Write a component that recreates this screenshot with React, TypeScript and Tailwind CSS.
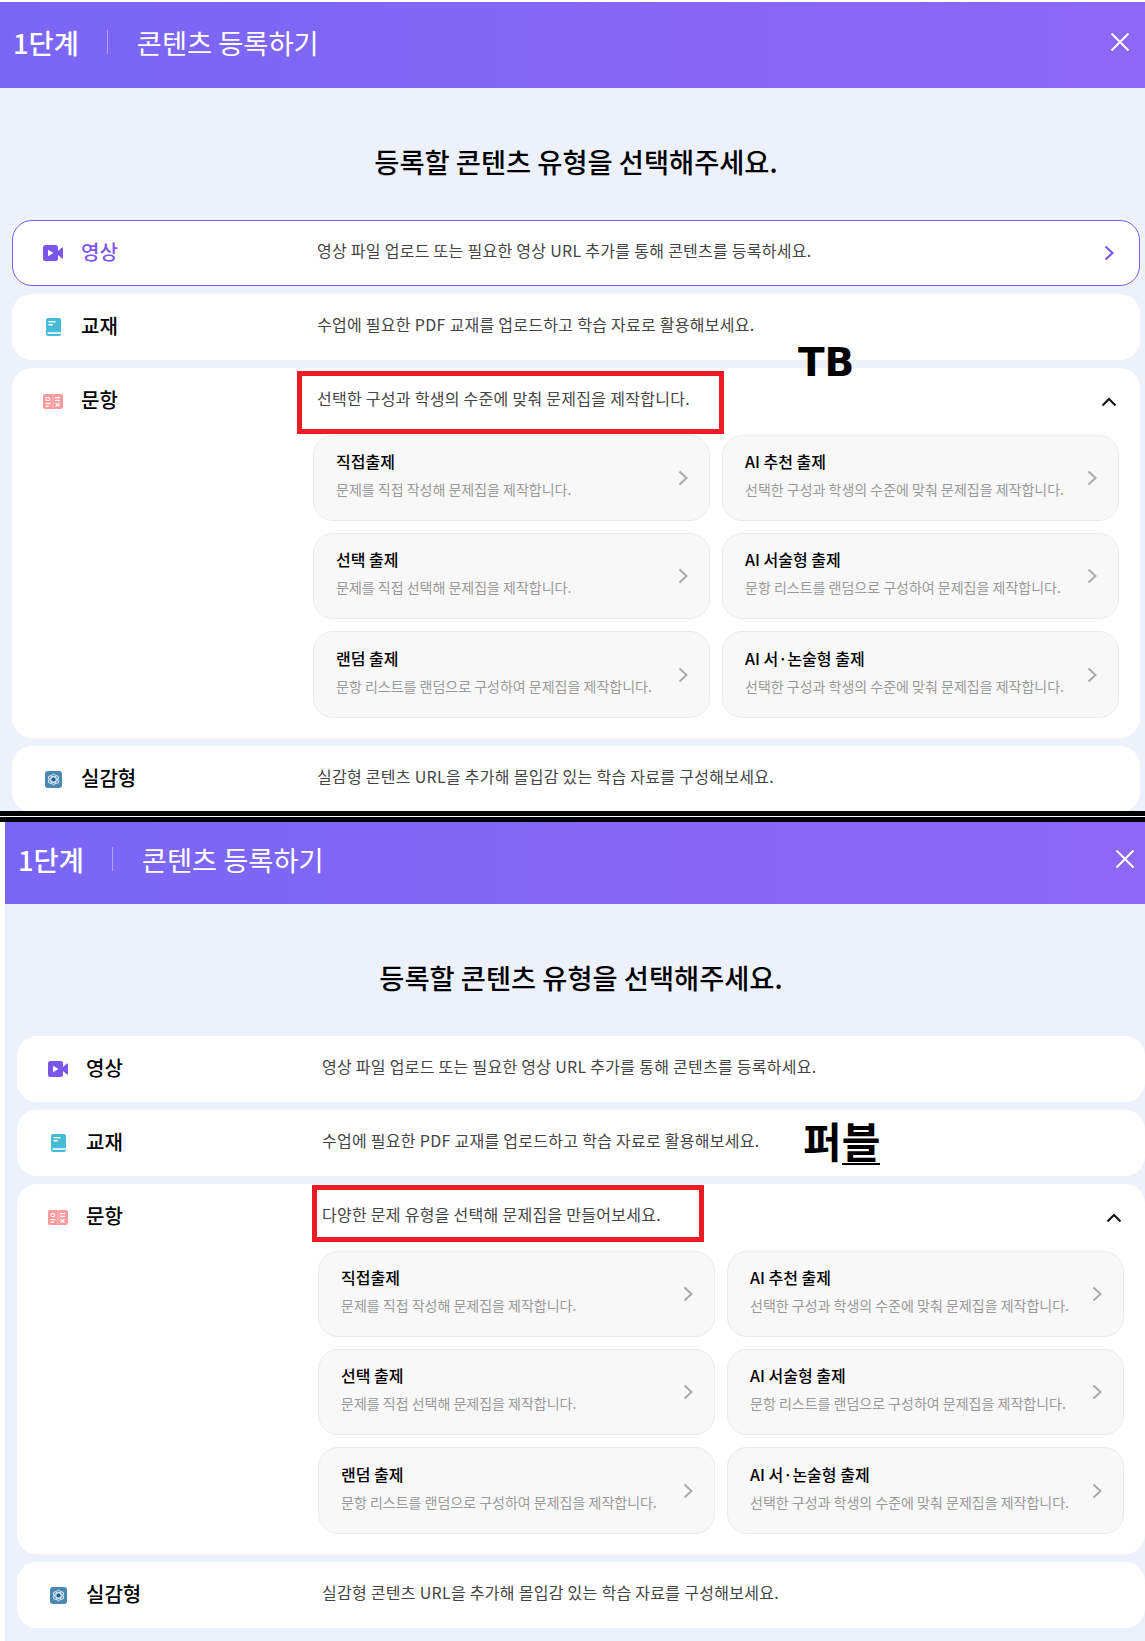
import type { ReactNode } from 'react'

const cards = [
  { title: '직접출제', desc: '문제를 직접 작성해 문제집을 제작합니다.' },
  { title: 'AI 추천 출제', desc: '선택한 구성과 학생의 수준에 맞춰 문제집을 제작합니다.' },
  { title: '선택 출제', desc: '문제를 직접 선택해 문제집을 제작합니다.' },
  { title: 'AI 서술형 출제', desc: '문항 리스트를 랜덤으로 구성하여 문제집을 제작합니다.' },
  { title: '랜덤 출제', desc: '문항 리스트를 랜덤으로 구성하여 문제집을 제작합니다.' },
  { title: 'AI 서·논술형 출제', desc: '선택한 구성과 학생의 수준에 맞춰 문제집을 제작합니다.' },
]

function VideoIcon() {
  return (
    <svg width="20" height="16" viewBox="0 0 20 16">
      <rect x="0" y="0" width="15" height="16" rx="2.5" fill="#7a55ee" />
      <path d="M15 6 L19 2.5 Q20 2 20 3.5 V12.5 Q20 14 19 13.5 L15 10 Z" fill="#7a55ee" />
      <path d="M5 4.8 L10.5 8 L5 11.2 Z" fill="#ffffff" />
    </svg>
  )
}

function BookIcon() {
  return (
    <svg width="15" height="18" viewBox="0 0 15 18">
      <rect x="0" y="0" width="15" height="18" rx="2" fill="#45bcd6" />
      <rect x="2.5" y="3" width="7" height="1.4" fill="#ffffff" />
      <rect x="2.5" y="6" width="4.5" height="1.4" fill="#ffffff" />
      <rect x="1.5" y="14" width="13.5" height="2" fill="#d5f0f6" />
    </svg>
  )
}

function QuizIcon() {
  return (
    <svg width="20" height="15" viewBox="0 0 20 15">
      <rect x="0" y="0" width="20" height="15" rx="2" fill="#ff9a9e" />
      <rect x="9.7" y="0" width="0.6" height="15" fill="#ffd9da" />
      <rect x="3" y="3.5" width="3.5" height="3" rx="0.5" fill="none" stroke="#ffffff" strokeWidth="1" />
      <rect x="12" y="3" width="5" height="1.2" fill="#ffffff" />
      <rect x="12" y="5.8" width="5" height="1.2" fill="#ffffff" />
      <rect x="2.5" y="9" width="5" height="1.2" fill="#ffffff" />
      <rect x="2.5" y="11.5" width="3.5" height="1.2" fill="#ffffff" />
      <path d="M12.5 9 L16.5 12.5 M16.5 9 L12.5 12.5" stroke="#ffffff" strokeWidth="1.3" />
    </svg>
  )
}

function ImmersiveIcon() {
  return (
    <svg width="17" height="17" viewBox="0 0 17 17">
      <rect x="0" y="0" width="17" height="17" rx="3" fill="#4a88b3" />
      <circle cx="8.5" cy="8.5" r="2.3" fill="#1f5f8c" />
      <g fill="none" stroke="#d6e8f3" strokeWidth="1">
        <ellipse cx="8.5" cy="8.5" rx="2.6" ry="5.6" />
        <ellipse cx="8.5" cy="8.5" rx="2.6" ry="5.6" transform="rotate(60 8.5 8.5)" />
        <ellipse cx="8.5" cy="8.5" rx="2.6" ry="5.6" transform="rotate(120 8.5 8.5)" />
      </g>
    </svg>
  )
}

function Chevron({ color, width = 2 }: { color: string; width?: number }) {
  return (
    <svg width="10" height="16" viewBox="0 0 10 16" className="shrink-0">
      <polyline points="1.5,1.5 8.5,8 1.5,14.5" fill="none" stroke={color} strokeWidth={width} />
    </svg>
  )
}

function Row({
  icon,
  label,
  desc,
  active,
  right,
  children,
}: {
  icon: ReactNode
  label: string
  desc: string
  active?: boolean
  right?: ReactNode
  children?: ReactNode
}) {
  return (
    <div className={`relative rounded-[20px] border bg-white ${active ? 'border-[#7c5cf0]' : 'border-transparent'}`}>
      <div className="flex h-[64px] items-center pl-[30px] pr-[25px]">
        <div className="flex w-[20px] justify-center">{icon}</div>
        <div className={`ml-[18px] w-[236px] pb-[3px] text-[20px] font-medium ${active ? 'text-[#7a55ee]' : 'text-black'}`}>{label}</div>
        <div className="flex-1 pb-[6px] text-[16px] tracking-[0.28px] text-[#444444]">{desc}</div>
        {right}
      </div>
      {children}
    </div>
  )
}

function Panel({ desc, active, headerClass, outerClass, mark }: { desc: string; active?: boolean; headerClass: string; outerClass: string; mark: ReactNode }) {
  return (
    <div className={`relative overflow-hidden bg-[#edf1fc] ${outerClass}`}>
      <div className="w-[1152px]">
        <div className={`flex items-center bg-gradient-to-r from-[#7a66f5] to-[#8d68f4] pl-[13px] text-white ${headerClass}`}>
          <span className="text-[27.3px] font-medium">1단계</span>
          <span className="ml-[28px] h-[24px] w-px bg-white/40" />
          <span className="ml-[29px] text-[27.3px]">콘텐츠 등록하기</span>
          <svg width="20" height="20" viewBox="0 0 20 20" className="ml-auto mr-[22px]">
            <path d="M1.5 1.5 L18.5 18.5 M18.5 1.5 L1.5 18.5" stroke="#ffffff" strokeWidth="2" fill="none" />
          </svg>
        </div>
        <h1 className="pt-[53px] pb-[39px] text-center text-[27.3px] leading-[40px] font-medium text-black">등록할 콘텐츠 유형을 선택해주세요.</h1>
        <div className="flex flex-col gap-2 px-3">
          <Row
            icon={<VideoIcon />}
            label="영상"
            desc="영상 파일 업로드 또는 필요한 영상 URL 추가를 통해 콘텐츠를 등록하세요."
            active={active}
            right={active ? <Chevron color="#7a55ee" width={2.2} /> : undefined}
          />
          <Row icon={<BookIcon />} label="교재" desc="수업에 필요한 PDF 교재를 업로드하고 학습 자료로 활용해보세요." />
          <Row icon={<QuizIcon />} label="문항" desc={desc} right={
            <svg width="16" height="10" viewBox="0 0 16 10" className="shrink-0 translate-x-[3px] translate-y-[1px]">
              <polyline points="1.5,8.5 8,2 14.5,8.5" fill="none" stroke="#111111" strokeWidth="2" />
            </svg>
          }>
            <div className="mt-[2px] mr-[20px] mb-[19px] ml-[300px] grid grid-cols-2 gap-3">
              {cards.map((c, i) => (
                <div
                  key={c.title}
                  className={`flex items-center justify-between rounded-[20px] border border-[#ebebeb] bg-[#f8f8f8] pr-[21px] pl-[22px] ${i > 3 ? 'h-[87px]' : 'h-[86px]'}`}
                >
                  <div className="pb-[8px]">
                    <div className="text-[16px] leading-[24px] font-medium text-black">{c.title}</div>
                    <div className="mt-[6px] text-[14px] leading-[20px] text-[#9a9a9a]">{c.desc}</div>
                  </div>
                  <Chevron color="#aaaaaa" />
                </div>
              ))}
            </div>
          </Row>
          <Row icon={<ImmersiveIcon />} label="실감형" desc="실감형 콘텐츠 URL을 추가해 몰입감 있는 학습 자료를 구성해보세요." />
        </div>
      </div>
      {mark}
    </div>
  )
}

export default function App() {
  return (
    <div className="relative h-[1641px] w-[1145px] overflow-hidden bg-white font-['Noto_Sans_CJK_KR',sans-serif]">
      <div className="h-[2px]" />
      <Panel
        active
        desc="선택한 구성과 학생의 수준에 맞춰 문제집을 제작합니다."
        headerClass="h-[86px] pb-[6px]"
        outerClass="h-[809px]"
        mark={
          <>
            <div className="absolute top-[369px] left-[297px] h-[63px] w-[427px] border-[5px] border-[#ed1c24]" />
            <div className="absolute top-[338px] left-[798px] font-['DejaVu_Sans',sans-serif] text-[39px] leading-[46px] font-bold text-black">TB</div>
          </>
        }
      />
      <div className="h-[5px] bg-black" />
      <div className="h-px bg-white" />
      <div className="h-[5px] bg-black" />
      <div className="ml-[5px]">
        <Panel
          desc="다양한 문제 유형을 선택해 문제집을 만들어보세요."
          headerClass="h-[82px] pb-[8px]"
          outerClass="h-[819px]"
          mark={
            <>
              <div className="absolute top-[363px] left-[307px] h-[57px] w-[392px] border-[5px] border-[#ed1c24]" />
              <div className="absolute top-[295px] left-[798px] text-[42px] leading-[46px] font-bold text-black">
                퍼<span className="inline-block border-b-2 border-black leading-[46px]">블</span>
              </div>
            </>
          }
        />
      </div>
    </div>
  )
}
